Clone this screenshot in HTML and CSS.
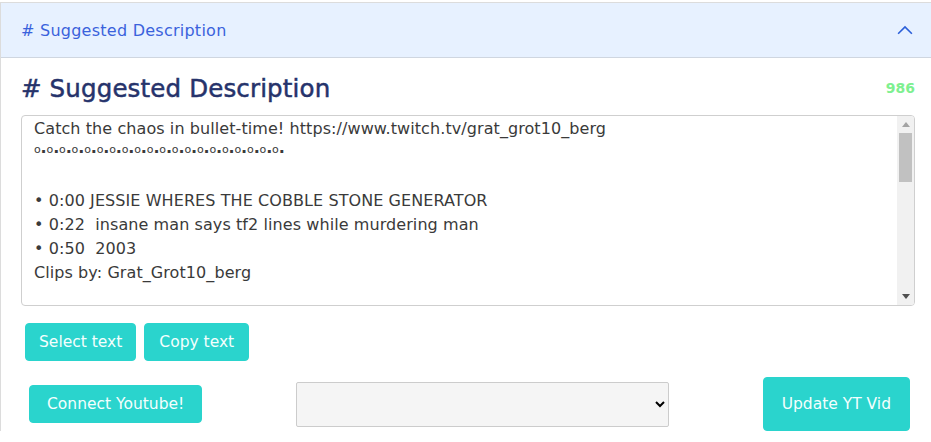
FILE: index.html
```html
<!DOCTYPE html>
<html>
<head>
<meta charset="utf-8">
<link rel="stylesheet" href="styles.css">
</head>
<body>
<div class="card">
  <div class="acc-header">
    <span class="acc-title"># Suggested Description</span>
    <svg class="chev" width="20" height="20" viewBox="0 0 16 16"><path d="M2.5 11 L8 5.5 L13.5 11" fill="none" stroke="#2b5fd9" stroke-width="1.3"/></svg>
  </div>
  <div class="acc-body">
    <div class="title-row">
      <h4 class="title"># Suggested Description</h4>
      <span class="count">986</span>
    </div>
    <div class="desc-box">
      <div class="desc" role="textbox">
        <div class="line">Catch the chaos in bullet-time! https://www.twitch.tv/grat_grot10_berg</div>
        <div class="line dots"><span>o</span>.<span>o</span>.<span>o</span>.<span>o</span>.<span>o</span>.<span>o</span>.<span>o</span>.<span>o</span>.<span>o</span>.<span>o</span>.<span>o</span>.<span>o</span>.<span>o</span>.<span>o</span>.<span>o</span>.<span>o</span>.<span>o</span>.<span>o</span>.<span>o</span>.<span>o</span>.</div>
        <div class="line">&nbsp;</div>
        <div class="line">• 0:00 JESSIE WHERES THE COBBLE STONE GENERATOR</div>
        <div class="line">• 0:22  insane man says tf2 lines while murdering man</div>
        <div class="line">• 0:50  2003</div>
        <div class="line">Clips by: Grat_Grot10_berg</div>
      </div>
      <div class="scrollbar">
        <div class="sb-btn"><svg width="8" height="5" viewBox="0 0 8 5"><path d="M0 5 L4 0 L8 5 Z" fill="#a3a3a3"/></svg></div>
        <div class="sb-track"><div class="sb-thumb"></div></div>
        <div class="sb-btn"><svg width="8" height="5" viewBox="0 0 8 5"><path d="M0 0 L4 5 L8 0 Z" fill="#505050"/></svg></div>
      </div>
    </div>
    <div class="btn-row">
      <button class="btn btn-select">Select text</button>
      <button class="btn btn-copy">Copy text</button>
    </div>
    <div class="yt-row">
      <button class="btn btn-connect">Connect Youtube!</button>
      <select class="yt-select"><option></option></select>
      <button class="btn btn-tall">Update YT Vid</button>
    </div>
  </div>
</div>
</body>
</html>
```
FILE: styles.css
```css
html, body {
  margin: 0;
  padding: 0;
  overflow: hidden;
  background: #fff;
}
body {
  padding-top: 2px;
  font-family: "DejaVu Sans", sans-serif;
}
.card {
  width: 934px;
  border: 1px solid #dcdcdc;
  border-bottom: none;
  background: #fff;
}
.acc-header {
  height: 55px;
  background: #e7f1ff;
  border-bottom: 1px solid #cfd6e0;
  display: flex;
  align-items: center;
  justify-content: space-between;
  padding: 0 20px;
  box-sizing: border-box;
}
.acc-title {
  color: #3a62dc;
  font-size: 16px;
  letter-spacing: 0.25px;
  margin-top: 1px;
}
.chev {
  display: block;
}
.acc-body {
  padding: 15px 20px 0 20px;
}
.title-row {
  display: flex;
  align-items: center;
  justify-content: space-between;
  height: 30px;
  margin-bottom: 12px;
}
.title {
  margin: 0;
  font-size: 24.5px;
  letter-spacing: 0.15px;
  font-weight: normal;
  -webkit-text-stroke: 0.5px #26336b;
  color: #26336b;
  line-height: 30px;
  padding-top: 2px;
}
.count {
  color: #7ef090;
  font-weight: bold;
  font-size: 14px;
}
.desc-box {
  position: relative;
  height: 191px;
  box-sizing: border-box;
  border: 1px solid #cfcfcf;
  border-radius: 4px;
  overflow: hidden;
}
.desc {
  padding: 1px 12px 0 12px;
  font-size: 16px;
  line-height: 24px;
  color: #3a3a3a;
  letter-spacing: 0.08px;
}
.line {
  white-space: pre;
  height: 24px;
}
.dots {
  font-weight: bold;
  letter-spacing: -0.15px;
  line-height: 14px;
}
.dots span {
  font-size: 11px;
  font-weight: normal;
}
.scrollbar {
  position: absolute;
  top: 0;
  right: 0;
  bottom: 0;
  width: 17px;
  background: #f1f1f1;
  display: flex;
  flex-direction: column;
}
.sb-btn {
  height: 17px;
  display: flex;
  align-items: center;
  justify-content: center;
}
.sb-btn svg {
  display: block;
}
.sb-track {
  flex: 1;
  padding: 0 2px;
}
.sb-thumb {
  height: 49px;
  background: #c1c1c1;
}
.btn {
  background: #2ad4cd;
  color: #f4fffe;
  border: 1px solid #2ad4cd;
  border-radius: 4px;
  font-family: "DejaVu Sans", sans-serif;
  font-size: 15.5px;
  line-height: 24px;
  padding: 6px 12px;
  cursor: pointer;
}
.btn-row {
  display: flex;
  gap: 8px;
  padding: 17px 4px 0 4px;
}
.btn-select {
  padding: 6px 13px;
}
.btn-copy {
  padding: 6px 14px;
}
.yt-row {
  display: flex;
  align-items: center;
  justify-content: space-between;
  padding: 16px 5px 0 8px;
}
.btn-connect {
  padding: 6px 17px;
}
.yt-select {
  width: 373px;
  height: 45px;
  background: #f5f5f5;
  border: 1px solid #cccccc;
  border-radius: 2px;
}
.btn-tall {
  padding: 14px 18px;
}
```
